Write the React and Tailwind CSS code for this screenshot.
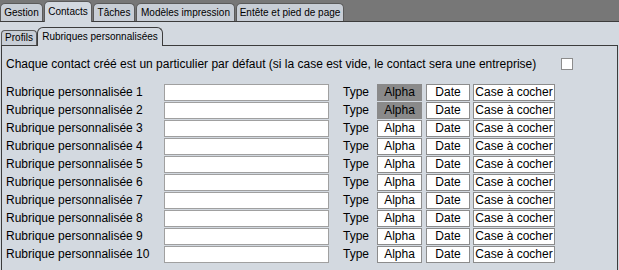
import React from "react";

const mainTabs = [
  { label: "Gestion", w: "w-[43px]" },
  { label: "Contacts", w: "w-[48px]", active: true },
  { label: "Tâches", w: "w-[42px]" },
  { label: "Modèles impression", w: "w-[99px]" },
  { label: "Entête et pied de page", w: "w-[108px]" },
];

function Row({ n, alpha }) {
  return (
    <div className="flex items-center h-[18px]">
      <div className="w-[158px] text-[12px] leading-[14px]">Rubrique personnalisée {n}</div>
      <div className="w-[165px] h-[17px] bg-white border border-[#a0a0a0]" />
      <div className="w-[48px] pl-[14px] text-[12px] leading-[14px]">Type</div>
      <div
        className={
          "w-[45px] h-[17px] flex items-center justify-center text-[12px] leading-[14px] border " +
          (alpha ? "bg-[#8a8a8a] border-[#8a8a8a]" : "bg-white border-[#8c8c8c]")
        }
      >
        Alpha
      </div>
      <div className="ml-[4px] w-[44px] h-[17px] flex items-center justify-center text-[12px] leading-[14px] bg-white border border-[#8c8c8c]">
        Date
      </div>
      <div className="ml-[3px] w-[82px] h-[17px] flex items-center justify-center text-[12px] leading-[14px] bg-white border border-[#8c8c8c]">
        Case à cocher
      </div>
    </div>
  );
}

export default function App() {
  return (
    <div className="w-[619px] h-[270px] overflow-hidden bg-[#d3d9e0] text-black font-['Liberation_Sans',Arial,sans-serif]">
      <div className="h-[22px] bg-[#777777] border-b border-[#3c3c3c] flex items-end gap-[1px]">
        {mainTabs.map((t) => (
          <div
            key={t.label}
            className={
              t.w +
              " rounded-t-[5px] border border-b-0 border-[#5a5a5a] flex items-center justify-center text-[10px] leading-[12px] " +
              (t.active
                ? "h-[21px] bg-[#d3d9e0] relative z-10 -mb-[1px]"
                : "h-[18px] bg-[#c8ced6]")
            }
          >
            {t.label}
          </div>
        ))}
      </div>
      <div className="mt-[4px] pl-[1px] flex items-end h-[19px]">
        <div className="w-[36px] h-[15px] rounded-t-[4px] border border-b-0 border-[#5a5a5a] bg-[#c8ced6] flex items-center justify-center text-[10px] leading-[12px]">
          Profils
        </div>
        <div className="w-[126px] h-[19px] rounded-t-[6px] border border-b-0 border-[#3c3c3c] bg-[#d3d9e0] relative z-10 -mb-[1px] flex items-center justify-center text-[10px] leading-[12px]">
          Rubriques personnalisées
        </div>
      </div>
      <div className="ml-[1px] w-[617px] h-[230px] border border-b-0 border-[#3c3c3c] pl-[4px] pt-[11px]">
        <div className="flex items-center h-[14px]">
          <div className="w-[555px] text-[12px] leading-[14px]">
            Chaque contact créé est un particulier par défaut (si la case est vide, le contact sera une entreprise)
          </div>
          <div className="w-[12px] h-[12px] bg-white border border-[#8c8c8c]" />
        </div>
        <div className="mt-[12px] flex flex-col">
          {[1, 2, 3, 4, 5, 6, 7, 8, 9, 10].map((n) => (
            <Row key={n} n={n} alpha={n <= 2} />
          ))}
        </div>
      </div>
    </div>
  );
}
